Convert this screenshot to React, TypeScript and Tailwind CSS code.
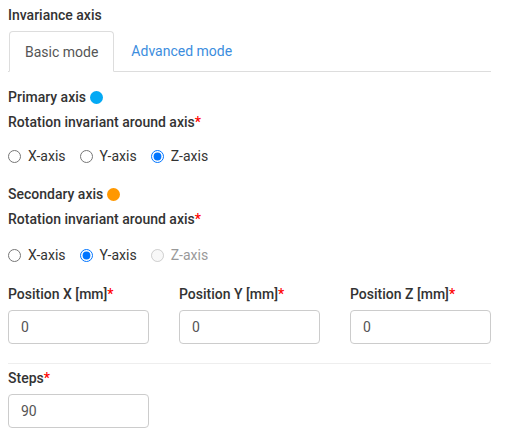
import React from "react";

const Req = () => <span className="text-[#ff0000]">*</span>;

function Radio({ name, label, checked, disabled }: { name: string; label: string; checked?: boolean; disabled?: boolean }) {
  return (
    <label className={`flex items-center h-5 mr-[14px] ${disabled ? "text-[#999]" : "text-[#333]"}`}>
      <input
        type="radio"
        name={name}
        defaultChecked={checked}
        disabled={disabled}
        className="m-0 w-[13px] h-[13px] mr-[7px]"
      />
      {label}
    </label>
  );
}

function Field({ label, value }: { label: string; value: string }) {
  return (
    <div className="flex flex-col">
      <div className="h-5 leading-5 font-medium text-[#333] mb-[6px]">
        {label}
        <Req />
      </div>
      <input
        defaultValue={value}
        className="w-[141px] h-[34px] border border-[#ccc] rounded-[4px] px-3 text-[#555] outline-none"
      />
    </div>
  );
}

export default function App() {
  return (
    <div
      className="w-[505px] h-[436px] bg-white pl-2 pr-[14px] pt-[5px] text-[14px] text-[#333]"
      style={{ fontFamily: "Roboto, 'Liberation Sans', sans-serif" }}
    >
      <div className="h-5 leading-5 font-medium mb-[6px]">Invariance axis</div>
      <div className="flex border-b border-[#ddd] h-[41px]">
        <div className="ml-px h-[41px] px-[15px] pt-[10px] border border-[#ddd] border-b-white rounded-t-[4px] text-[#555] leading-5 bg-white whitespace-nowrap">
          Basic mode
        </div>
        <div className="ml-[2px] h-10 px-[15px] pt-[10px] text-[#3c8dde] leading-5 whitespace-nowrap">Advanced mode</div>
      </div>

      <div className="mt-[15px] h-5 leading-5 font-medium flex items-center">
        Primary axis
        <span className="ml-[4px] inline-block w-[13px] h-[13px] rounded-full bg-[#03a9f4]" />
      </div>
      <div className="mt-[5px] h-5 leading-5 font-medium">
        Rotation invariant around axis<Req />
      </div>
      <div className="mt-[14px] flex">
        <Radio name="p" label="X-axis" />
        <Radio name="p" label="Y-axis" />
        <Radio name="p" label="Z-axis" checked />
      </div>

      <div className="mt-[18px] h-5 leading-5 font-medium flex items-center">
        Secondary axis
        <span className="ml-[4px] inline-block w-[13px] h-[13px] rounded-full bg-[#ff9800]" />
      </div>
      <div className="mt-[5px] h-5 leading-5 font-medium">
        Rotation invariant around axis<Req />
      </div>
      <div className="mt-[16px] flex">
        <Radio name="s" label="X-axis" />
        <Radio name="s" label="Y-axis" checked />
        <Radio name="s" label="Z-axis" disabled />
      </div>

      <div className="mt-[19px] flex gap-[30px]">
        <Field label="Position X [mm]" value="0" />
        <Field label="Position Y [mm]" value="0" />
        <Field label="Position Z [mm]" value="0" />
      </div>

      <div className="mt-[19px] border-t border-[#eee]" />
      <div className="mt-[4px]">
        <Field label="Steps" value="90" />
      </div>
    </div>
  );
}
